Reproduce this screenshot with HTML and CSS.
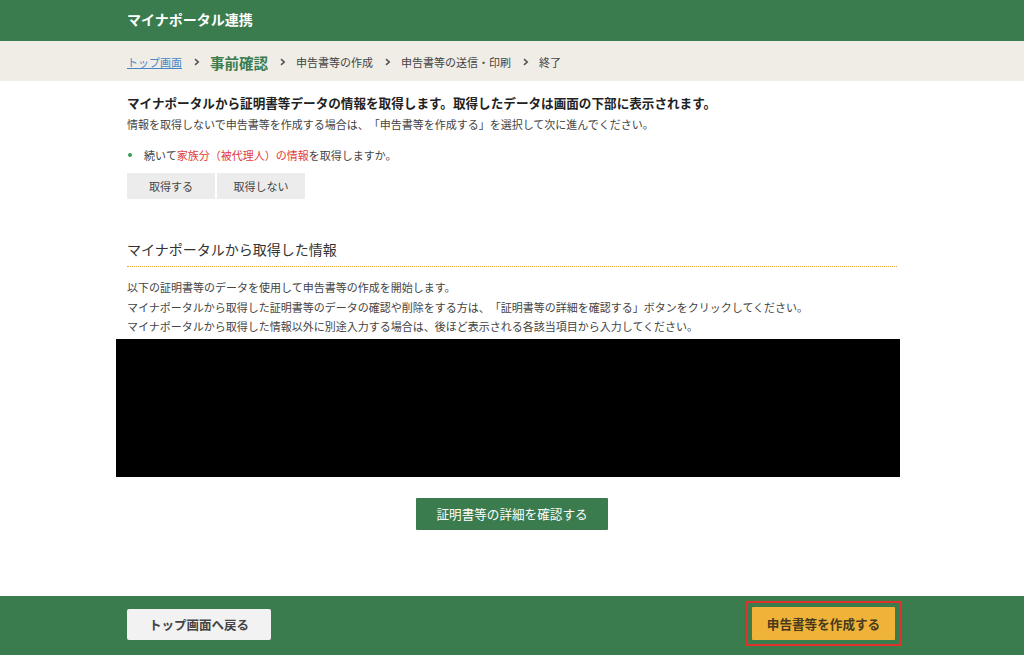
FILE: index.html
```html
<!DOCTYPE html>
<html lang="ja">
<head>
  <meta charset="UTF-8">
  <title>マイナポータル連携</title>
  <link rel="stylesheet" href="styles.css">
</head>
<body>
  <div class="page">
    <!-- Title bar -->
    <header class="title-bar">
      <div class="inner">
        <h1 class="title">マイナポータル連携</h1>
      </div>
    </header>

    <!-- Step breadcrumb -->
    <nav class="steps">
      <div class="inner steps-row">
        <a href="#" class="step step-link">トップ画面</a>
        <span class="chev"><svg width="6" height="8" viewBox="0 0 6 8"><path d="M1 1.2l3.2 2.8L1 6.8" fill="none" stroke="#555" stroke-width="1.6"/></svg></span>
        <span class="step step-current">事前確認</span>
        <span class="chev"><svg width="6" height="8" viewBox="0 0 6 8"><path d="M1 1.2l3.2 2.8L1 6.8" fill="none" stroke="#555" stroke-width="1.6"/></svg></span>
        <span class="step">申告書等の作成</span>
        <span class="chev"><svg width="6" height="8" viewBox="0 0 6 8"><path d="M1 1.2l3.2 2.8L1 6.8" fill="none" stroke="#555" stroke-width="1.6"/></svg></span>
        <span class="step">申告書等の送信・印刷</span>
        <span class="chev"><svg width="6" height="8" viewBox="0 0 6 8"><path d="M1 1.2l3.2 2.8L1 6.8" fill="none" stroke="#555" stroke-width="1.6"/></svg></span>
        <span class="step">終了</span>
      </div>
    </nav>

    <!-- Main content -->
    <main class="main">
      <div class="inner">
        <p class="lead">マイナポータルから証明書等データの情報を取得します。取得したデータは画面の下部に表示されます。</p>
        <p class="note">情報を取得しないで申告書等を作成する場合は、「申告書等を作成する」を選択して次に進んでください。</p>

        <div class="bullet">
          <span class="dot"></span>
          <span>続いて<span class="red">家族分（被代理人）の情報</span>を取得しますか。</span>
        </div>

        <div class="choice">
          <button class="choice-button">取得する</button>
          <button class="choice-button">取得しない</button>
        </div>

        <h2 class="section-title">マイナポータルから取得した情報</h2>
        <div class="section-text">
          <p>以下の証明書等のデータを使用して申告書等の作成を開始します。</p>
          <p>マイナポータルから取得した証明書等のデータの確認や削除をする方は、「証明書等の詳細を確認する」ボタンをクリックしてください。</p>
          <p>マイナポータルから取得した情報以外に別途入力する場合は、後ほど表示される各該当項目から入力してください。</p>
        </div>

        <div class="data-box"></div>

        <div class="center">
          <button class="green-button">証明書等の詳細を確認する</button>
        </div>
      </div>
    </main>

    <!-- Footer actions -->
    <footer class="footer">
      <div class="inner footer-row">
        <button class="back-button">トップ画面へ戻る</button>
        <div class="next-wrap">
          <button class="next-button">申告書等を作成する</button>
        </div>
      </div>
    </footer>
  </div>
</body>
</html>
```

FILE: styles.css
```css
/* Base */
* {
  box-sizing: border-box;
}

body {
  margin: 0;
  font-family: "Noto Sans CJK JP", "Noto Sans", sans-serif;
  color: #333;
  background: #fff;
  text-spacing-trim: space-all;
}

p, h1, h2 {
  margin: 0;
}

button {
  font-family: inherit;
  border: none;
  cursor: pointer;
}

.page {
  min-height: 100vh;
  display: flex;
  flex-direction: column;
}

.inner {
  width: 770px;
  margin: 0 auto;
}

/* Title bar */
.title-bar {
  background: #3a7c4e;
  height: 41px;
  display: flex;
  align-items: center;
}

.title {
  color: #fff;
  font-size: 14px;
  font-weight: bold;
  line-height: 20px;
  padding-bottom: 3px;
}

/* Steps */
.steps {
  background: #efede5;
  height: 40px;
  display: flex;
  align-items: center;
}

.steps-row {
  display: flex;
  align-items: center;
  font-size: 11px;
  color: #444;
  padding-top: 2px;
}

.step-link {
  color: #4a86c5;
  text-decoration: underline;
}

.step-current {
  color: #3a7c4e;
  font-size: 14.5px;
  font-weight: bold;
}

.chev {
  display: flex;
  margin: 0 10px 0 12px;
}

/* Main */
.main {
  flex: 1;
  padding-top: 12px;
}

.lead {
  font-size: 12.6px;
  font-weight: bold;
  line-height: 20px;
  color: #222;
}

.note {
  font-size: 11px;
  line-height: 22px;
  color: #444;
}

.bullet {
  display: flex;
  align-items: center;
  gap: 12px;
  margin-top: 10px;
  font-size: 11px;
  line-height: 20px;
  color: #444;
}

.dot {
  width: 4px;
  height: 4px;
  margin-left: 1px;
  border-radius: 50%;
  background: #3a9c52;
}

.red {
  color: #e0403a;
}

.choice {
  display: flex;
  gap: 2px;
  margin-top: 8px;
}

.choice-button {
  width: 88px;
  height: 26px;
  background: #ececec;
  color: #444;
  font-size: 11px;
}

.section-title {
  margin-top: 39px;
  font-size: 14px;
  font-weight: normal;
  line-height: 22px;
  color: #333;
  padding-bottom: 6px;
  border-bottom: 1px dotted #e8a23a;
}

.section-text {
  margin-top: 11px;
  font-size: 11px;
  line-height: 19.5px;
  color: #444;
}

.data-box {
  margin: 2px 0 0 -11px;
  width: 784px;
  height: 138px;
  background: #000;
}

.center {
  display: flex;
  justify-content: center;
  margin-top: 21px;
}

.green-button {
  width: 192px;
  height: 32px;
  background: #3a7c4e;
  color: #fff;
  font-size: 12.6px;
  border-radius: 1px;
}

/* Footer */
.footer {
  background: #3a7c4e;
  height: 59px;
}

.footer-row {
  display: flex;
  justify-content: space-between;
  align-items: flex-start;
}

.back-button {
  margin-top: 13px;
  width: 144px;
  height: 31px;
  background: #f2f2f2;
  color: #444;
  font-size: 12.5px;
  font-weight: bold;
  border-radius: 2px;
}

.next-wrap {
  margin: 5px -4px 0 0;
  padding: 4px;
  border: 2px solid #e0322b;
}

.next-button {
  display: block;
  width: 143px;
  height: 33px;
  background: #efb33a;
  color: #4a3a1a;
  font-size: 12.6px;
  font-weight: bold;
  border-radius: 1px;
}
```
